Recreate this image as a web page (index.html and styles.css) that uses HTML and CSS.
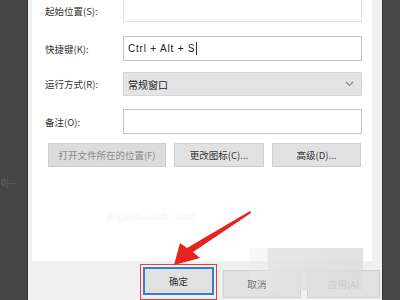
FILE: index.html
```html
<!DOCTYPE html>
<html>
<head>
<meta charset="utf-8" />
<title>快捷方式属性</title>
<link rel="stylesheet" href="styles.css">
</head>
<body>
<div class="desk">
  <div class="side-left"><span class="side-text">0)—</span></div>
  <div class="dialog">
    <div class="panel">
      <div class="row row-first">
        <span class="label">起始位置(S):</span>
        <div class="field field-cut"></div>
      </div>
      <div class="row row-key">
        <span class="label">快捷键(K):</span>
        <div class="field field-tall"><span class="val">Ctrl + Alt + S</span><span class="caret"></span></div>
      </div>
      <div class="row row-run">
        <span class="label">运行方式(R):</span>
        <div class="select"><span class="val">常规窗口</span>
          <svg class="chev" width="9" height="6" viewBox="0 0 9 6"><path d="M1 1 L4.5 4.5 L8 1" fill="none" stroke="#888" stroke-width="1.2"/></svg>
        </div>
      </div>
      <div class="row row-note">
        <span class="label">备注(O):</span>
        <div class="field field-tall"></div>
      </div>
      <div class="btn-row">
        <div class="btn btn-open disabled">打开文件所在的位置(F)</div>
        <div class="btn btn-icon">更改图标(C)...</div>
        <div class="btn btn-adv">高级(D)...</div>
      </div>
      <div class="wm">jingyan.baidu.com</div>
    </div>
    <div class="footer">
      <div class="ok-wrap"><div class="btn btn-ok">确定</div></div>
      <div class="btn btn-cancel">取消</div>
      <div class="btn btn-apply">应用(A)</div>
    </div>
  </div>
  <div class="side-right"></div>
</div>
<div class="blur-box"></div>
<svg class="arrow" width="400" height="300" viewBox="0 0 400 300">
  <polygon points="250,211 251,213 193,252 200,258 174,265 180,243 187,248" fill="#e8221c"/>
</svg>
</body>
</html>
```

FILE: styles.css
```css
*{
  margin:0;
  padding:0;
  box-sizing:border-box;
}
body{
  width:400px;
  height:300px;
  overflow:hidden;
  background:#444;
  font-family:"Noto Sans CJK SC","Liberation Sans",sans-serif;
  font-size:10px;
  color:#222;
  position:relative;
}
.desk{
  display:flex;
  height:300px;
}
.side-left{
  width:28px;
  background:#454545;
  border-right:1px solid #2f2f2f;
  position:relative;
}
.side-text{
  position:absolute;
  top:176px;
  left:1px;
  color:#666;
  font-size:9px;
}
.side-right{
  width:18px;
  background:#474747;
  border-left:1px solid #333;
}
.dialog{
  flex:1;
  background:#f0f0f0;
  padding-left:4px;
  display:flex;
  flex-direction:column;
}
.panel{
  height:264px;
  margin-right:10px;
  background:#fff;
  padding:0 10px 0 13px;
  position:relative;
}
.row{
  display:flex;
  align-items:center;
}
.label{
  width:78px;
  color:#333;
  font-size:9.5px;
}
.field,.select{
  flex:1;
  background:#fff;
  border:1px solid #c4c4c4;
  display:flex;
  align-items:center;
  padding-left:4px;
}
.field-cut{
  height:22px;
  border-top:none;
  border-color:#e2e2e2;
}
.field-tall{
  height:25px;
}
.row-key{ margin-top:14px; }
.row-run{ margin-top:11px; }
.row-note{ margin-top:13px; }
.val{
  font-size:10px;
  color:#222;
}
.field .val{
  font-family:"Liberation Sans",sans-serif;
  letter-spacing:0.8px;
}
.caret{
  width:1px;
  height:13px;
  background:#333;
  margin-left:1px;
}
.select{
  height:24px;
  background:#e4e4e4;
  border-color:#d6d6d6;
  justify-content:space-between;
  padding-right:7px;
}
.btn-row{
  display:flex;
  gap:8px;
  margin-top:9px;
  padding-left:3px;
}
.btn{
  height:24px;
  background:#e1e1e1;
  border:1px solid #cfcfcf;
  display:flex;
  align-items:center;
  justify-content:center;
  font-size:9.5px;
  color:#333;
}
.btn-open{ width:118px; }
.btn-icon{ width:90px; }
.btn-adv{ width:89px; }
.disabled{
  color:#8c8c8c;
  background:#dcdcdc;
}
.wm{
  position:absolute;
  top:210px;
  left:75px;
  color:#f6f6f6;
  font-size:11px;
  font-family:"Liberation Sans",sans-serif;
}
.footer{
  flex:1;
  display:flex;
  align-items:flex-start;
  padding:3px 0 0 108px;
  gap:6px;
}
.ok-wrap{
  border:1px solid #ee3b3b;
  padding:2px;
  height:36px;
}
.btn-ok{
  width:71px;
  height:28px;
  border:2px solid #2f7fd6;
}
.btn-cancel{
  width:78px;
  height:28px;
  margin-top:6px;
  padding-right:10px;
}
.btn-apply{
  width:73px;
  height:28px;
  margin-top:6px;
  color:#555;
}
.blur-box{
  position:absolute;
  left:249px;
  top:248px;
  width:114px;
  height:42px;
  background:linear-gradient(to right,rgba(235,235,235,0.35) 0,rgba(235,235,235,0.35) 16%,rgba(228,228,228,0.9) 17%,rgba(220,220,220,0.85));
}
.arrow{
  position:absolute;
  left:0;
  top:0;
}
```
